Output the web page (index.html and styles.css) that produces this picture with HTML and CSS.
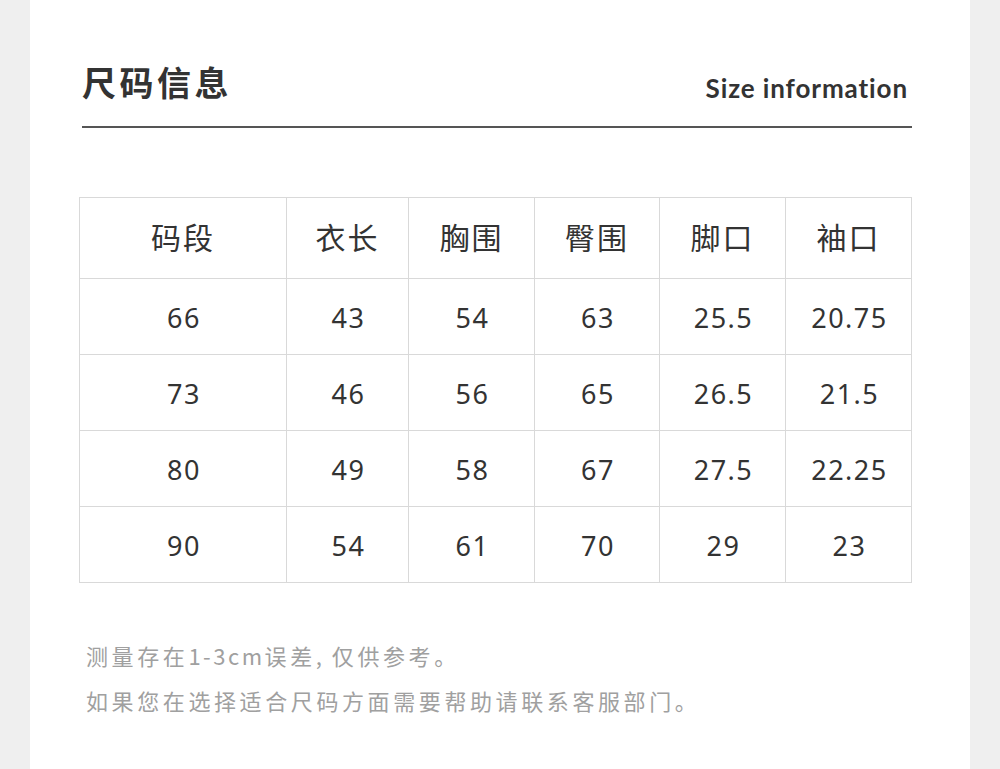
FILE: index.html
```html
<!DOCTYPE html>
<html lang="zh">
<head>
<meta charset="utf-8">
<link rel="stylesheet" href="styles.css">
</head>
<body>
<div class="page">
  <div class="card">
    <div class="header">
      <h1 class="title">尺码信息</h1>
      <div class="subtitle">Size information</div>
    </div>
    <table class="size-table">
      <colgroup>
        <col class="c1"><col class="c2"><col class="c3"><col class="c4"><col class="c5"><col class="c6">
      </colgroup>
      <thead>
        <tr><th>码段</th><th>衣长</th><th>胸围</th><th>臀围</th><th>脚口</th><th>袖口</th></tr>
      </thead>
      <tbody>
        <tr><td>66</td><td>43</td><td>54</td><td>63</td><td>25.5</td><td>20.75</td></tr>
        <tr><td>73</td><td>46</td><td>56</td><td>65</td><td>26.5</td><td>21.5</td></tr>
        <tr><td>80</td><td>49</td><td>58</td><td>67</td><td>27.5</td><td>22.25</td></tr>
        <tr><td>90</td><td>54</td><td>61</td><td>70</td><td>29</td><td>23</td></tr>
      </tbody>
    </table>
    <div class="notes">
      <p>测量存在<span class="latin">1-3cm</span>误差<span class="latin">, </span>仅供参考。</p>
      <p>如果您在选择适合尺码方面需要帮助请联系客服部门。</p>
    </div>
  </div>
</div>
</body>
</html>
```
FILE: styles.css
```css
html, body {
  margin: 0;
  padding: 0;
}
body {
  background: #efefef;
  font-family: "Noto Sans CJK SC", "Noto Sans", sans-serif;
  color: #333;
}
.page {
  width: 1000px;
  height: 769px;
  display: flex;
  justify-content: center;
  overflow: hidden;
}
.card {
  width: 940px;
  background: #fff;
  padding: 0 58px 0 49px;
  box-sizing: border-box;
}
.header {
  display: flex;
  justify-content: space-between;
  align-items: flex-end;
  margin: 0 0 0 3px;
  padding-top: 58px;
  padding-bottom: 20px;
  border-bottom: 2px solid #555;
}
.title {
  margin: 0;
  font-size: 34px;
  line-height: 48px;
  font-weight: 700;
  letter-spacing: 3.5px;
  color: #333;
}
.subtitle {
  font-family: "Lato", "Noto Sans", sans-serif;
  font-weight: 700;
  font-size: 26px;
  line-height: 30px;
  color: #333;
  margin-right: 4px;
  margin-bottom: 3px;
  letter-spacing: 0.9px;
}
.size-table {
  margin-top: 69px;
  width: 832px;
  border-collapse: collapse;
  table-layout: fixed;
}
.c1 { width: 207px; }
.c2 { width: 122px; }
.c3 { width: 126px; }
.c4 { width: 125px; }
.c5 { width: 126px; }
.c6 { width: 126px; }
.size-table th,
.size-table td {
  border: 1px solid #d9d9d9;
  text-align: center;
  color: #333;
  padding: 0;
  box-sizing: border-box;
}
.size-table th {
  height: 81px;
  padding-bottom: 4px;
  font-size: 30px;
  font-weight: 400;
  letter-spacing: 2px;
}
.size-table td {
  height: 76px;
  padding: 1px 0 0 2px;
  font-size: 27px;
  font-family: "Noto Sans", sans-serif;
  letter-spacing: 1.5px;
}
.notes {
  margin-top: 50px;
  padding-left: 7px;
  color: #a0a0a0;
  font-size: 22px;
  font-weight: 400;
  letter-spacing: 3.6px;
}
.notes .latin {
  letter-spacing: 2.5px;
}
.notes p {
  margin: 0;
  line-height: 45px;
}
```
